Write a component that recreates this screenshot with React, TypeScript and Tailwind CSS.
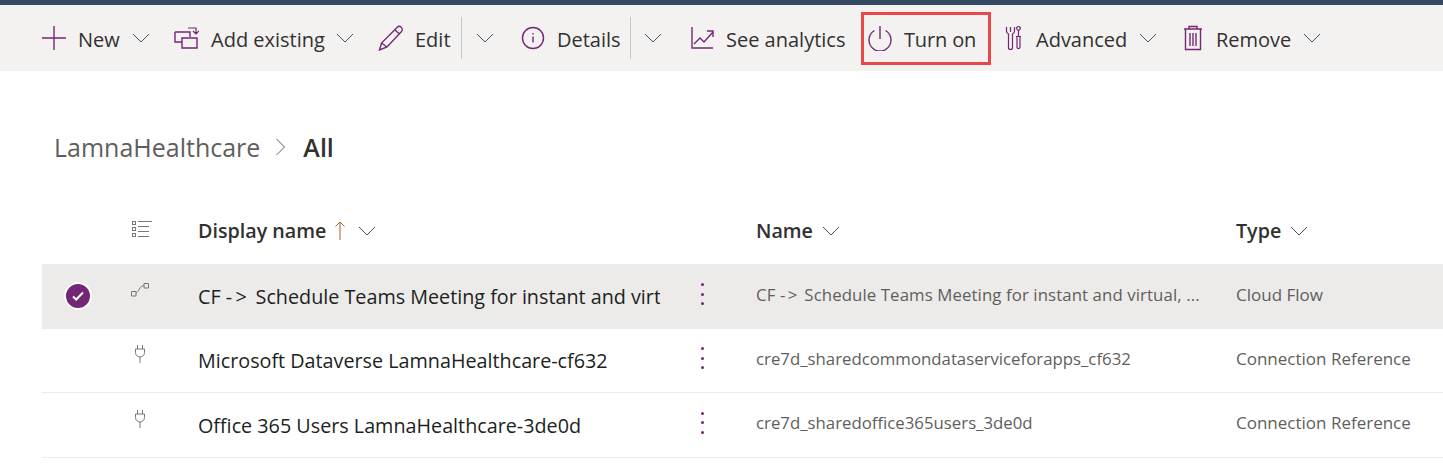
import type { ReactNode } from "react";

const purple = "#742774";

function Chevron({ className = "" }: { className?: string }) {
  return (
    <svg width="18" height="10" viewBox="0 0 18 10" fill="none" className={className}>
      <path d="M1 1l8 8 8-8" stroke="#44546a" strokeWidth="1" />
    </svg>
  );
}

function Icon({ children, w = 26, h = 26 }: { children: ReactNode; w?: number; h?: number }) {
  return (
    <svg width={w} height={h} viewBox={`0 0 ${w} ${h}`} fill="none" stroke={purple} strokeWidth="1.4" className="shrink-0">
      {children}
    </svg>
  );
}

function Label({ children, className = "" }: { children: ReactNode; className?: string }) {
  return <span className={`translate-y-[1.5px] whitespace-nowrap ${className}`}>{children}</span>;
}

function Plug() {
  return (
    <svg width="12" height="18" viewBox="0 0 12 18" fill="none" stroke="#777" strokeWidth="1">
      <path d="M3.500 0v4M8.500 0v4M1.500 4h9v3.500a4.500 4.500 0 0 1-9 0zM6 12v6" />
    </svg>
  );
}

function Dots() {
  return (
    <div className="flex h-[22px] w-[4px] flex-col items-center justify-between">
      <span className="h-[3px] w-[3px] rounded-full bg-[#742774]" />
      <span className="h-[3px] w-[3px] rounded-full bg-[#742774]" />
      <span className="h-[3px] w-[3px] rounded-full bg-[#742774]" />
    </div>
  );
}

function Row({
  icon,
  title,
  name,
  type,
  selected,
}: {
  icon: ReactNode;
  title: ReactNode;
  name: ReactNode;
  type: string;
  selected?: boolean;
}) {
  return (
    <div
      className={`grid h-[64.5px] grid-cols-[156px_558px_480px_207px] items-center ${
        selected ? "bg-[#edebe9]" : "border-b border-[#edebe9]"
      }`}
    >
      <div className="flex items-center pl-[22px]">
        <div className="flex w-[28px] justify-center">
          {selected && (
            <span className="flex h-[28px] w-[28px] items-center justify-center rounded-full border-[2px] border-white bg-[#742774]">
              <svg width="14" height="12" viewBox="0 0 14 12" fill="none">
                <path d="M2 6.500l3.200 3L12 2.500" stroke="white" strokeWidth="2" />
              </svg>
            </span>
          )}
        </div>
        <div className="ml-[36px] flex w-[24px] -translate-y-[6px] justify-center">{icon}</div>
      </div>
      <div className="flex items-center">
        <div className="w-[462px] translate-y-[1px] overflow-hidden whitespace-nowrap text-[19.75px] text-[#201f1e]">{title}</div>
        <div className="ml-[40px] -translate-y-[2px]">
          <Dots />
        </div>
      </div>
      <div className="w-[446px] -translate-y-[2px] truncate text-[16.8px] text-[#605e5c]">{name}</div>
      <div className="-translate-y-[2px] whitespace-nowrap text-[17px] text-[#605e5c]">{type}</div>
    </div>
  );
}

export default function App() {
  return (
    <div className="h-[466px] w-[1443px] overflow-hidden bg-white font-['Open_Sans','Liberation_Sans',sans-serif]">
      <div className="h-[5px] bg-[#34495f]" />
      <div className="flex h-[66px] items-center bg-[#f3f2f1] pl-[41px] text-[20px] text-[#323130]">
        <div className="flex w-[132px] items-center">
          <Icon>
            <path d="M13 1v24M1 13h24" />
          </Icon>
          <Label className="ml-[11px]">New</Label>
          <Chevron className="ml-[12px]" />
        </div>
        <div className="flex w-[205px] items-center">
          <Icon>
            <path d="M2 7h15v5M2 7v10h7M9 13h15v10H9z" />
            <path d="M15 3h8v5M20 6l3 3 3-3" strokeWidth="1.2" />
          </Icon>
          <Label className="ml-[12px]">Add existing</Label>
          <Chevron className="ml-[11px]" />
        </div>
        <div className="flex h-[42px] w-[84px] items-center border-r border-[#c8c6c4]">
          <Icon>
            <path d="M1.500 25l2-7L19 2.500a2.800 2.800 0 0 1 4.500 4L9 22zM3.500 18L9 22M17 5l4.500 4" />
          </Icon>
          <Label className="ml-[11px]">Edit</Label>
        </div>
        <div className="flex w-[58px] items-center pl-[14px]">
          <Chevron />
        </div>
        <div className="flex h-[42px] w-[111px] items-center border-r border-[#c8c6c4]">
          <Icon>
            <circle cx="13" cy="13" r="10.500" />
            <path d="M13 11.500v6M13 8v1.600" />
          </Icon>
          <Label className="ml-[11px]">Details</Label>
        </div>
        <div className="flex w-[59px] items-center pl-[13px]">
          <Chevron />
        </div>
        <div className="flex w-[171px] items-center">
          <Icon>
            <path d="M2 2v21h21M4 19l6-6 4 4 9-10M17 6h6v6" />
          </Icon>
          <Label className="ml-[10px]">See analytics</Label>
        </div>
        <div className="flex h-[53px] w-[130px] items-center border-[3px] border-[#e8484a] pl-[3px]">
          <Icon>
            <path d="M7.500 5.500a11 11 0 1 0 11 0M13 1v13" />
          </Icon>
          <Label className="ml-[11px] tracking-[-0.15px]">Turn on</Label>
        </div>
        <div className="ml-[14px] flex w-[178px] items-center">
          <Icon w={18}>
            <path d="M1.500 2v4a3 3 0 0 0 2 3v13.500a2 2 0 0 0 4 0V9a3 3 0 0 0 2-3V2M5.500 2v5" strokeWidth="1.200" />
            <path d="M13.500 1.500a1.800 1.800 0 1 1-.01 0zM13.500 5v6M11 11.500h5M12 11.500v11a1.600 1.600 0 0 0 3 0v-11" strokeWidth="1.200" />
          </Icon>
          <Label className="ml-[13px]">Advanced</Label>
          <Chevron className="ml-[12px]" />
        </div>
        <div className="flex items-center">
          <Icon w={20}>
            <path d="M1 4h18M6 4V1.500h8V4M2.500 4v20.500h15V4M7 8v13M10 8v13M13 8v13" />
          </Icon>
          <Label className="ml-[13px]">Remove</Label>
          <Chevron className="ml-[12px]" />
        </div>
      </div>

      <div className="flex items-center pl-[54px] pt-[58px] text-[25px] leading-[36px]">
        <span className="text-[#605e5c]">LamnaHealthcare</span>
        <svg width="12" height="18" viewBox="0 0 12 18" fill="none" className="ml-[15px]">
          <path d="M1.500 1l8 8-8 8" stroke="#605e5c" strokeWidth="1" />
        </svg>
        <span className="ml-[16px] font-semibold text-[#323130]">All</span>
      </div>

      <div className="mt-[33px] pl-[42px]">
        <div className="grid h-[66px] grid-cols-[156px_558px_480px_207px] items-center text-[19.7px] font-semibold text-[#323130]">
          <div className="flex justify-start pl-[89px]">
            <svg width="21" height="19" viewBox="0 0 21 19" fill="none" stroke="#777" strokeWidth="1" className="-translate-y-[2px]">
              <rect x="1.500" y="1.500" width="3" height="3" />
              <rect x="1.500" y="7.500" width="3" height="3" />
              <rect x="1.500" y="13.500" width="3" height="3" />
              <path d="M7 1.500h14M7 6.500h11M7 11.500h11M7 16.500h11" />
            </svg>
          </div>
          <div className="flex items-center">
            <span>Display name</span>
            <svg width="12" height="20" viewBox="0 0 12 20" fill="none" className="ml-[8px]">
              <path d="M6 19V1M1.500 5.500L6 1l4.500 4.500" stroke="#a4622c" strokeWidth="1" />
            </svg>
            <Chevron className="ml-[12px]" />
          </div>
          <div className="flex items-center">
            <span>Name</span>
            <Chevron className="ml-[9px]" />
          </div>
          <div className="flex items-center">
            <span>Type</span>
            <Chevron className="ml-[9px]" />
          </div>
        </div>
        <Row
          selected
          icon={
            <svg width="18" height="14" viewBox="0 0 18 14" fill="none" stroke="#777" strokeWidth="1">
              <path d="M.5 8.500h4.500v4.500H.5zM13 .5h4.500v4.500H13zM5 10c3-1 3-7 8-7.500" />
            </svg>
          }
          title={
            <>
              CF <span className="tracking-[3.5px]">-&gt;</span> Schedule Teams Meeting for instant and virtual, hybrid
            </>
          }
          name={
            <span className="tracking-[0.1px]">
              CF <span className="tracking-[2.5px]">-&gt;</span> Schedule Teams Meeting for instant and virtual, ...
            </span>
          }
          type="Cloud Flow"
        />
        <Row
          icon={<Plug />}
          title="Microsoft Dataverse LamnaHealthcare-cf632"
          name="cre7d_sharedcommondataserviceforapps_cf632"
          type="Connection Reference"
        />
        <Row
          icon={<Plug />}
          title="Office 365 Users LamnaHealthcare-3de0d"
          name="cre7d_sharedoffice365users_3de0d"
          type="Connection Reference"
        />
      </div>
    </div>
  );
}
